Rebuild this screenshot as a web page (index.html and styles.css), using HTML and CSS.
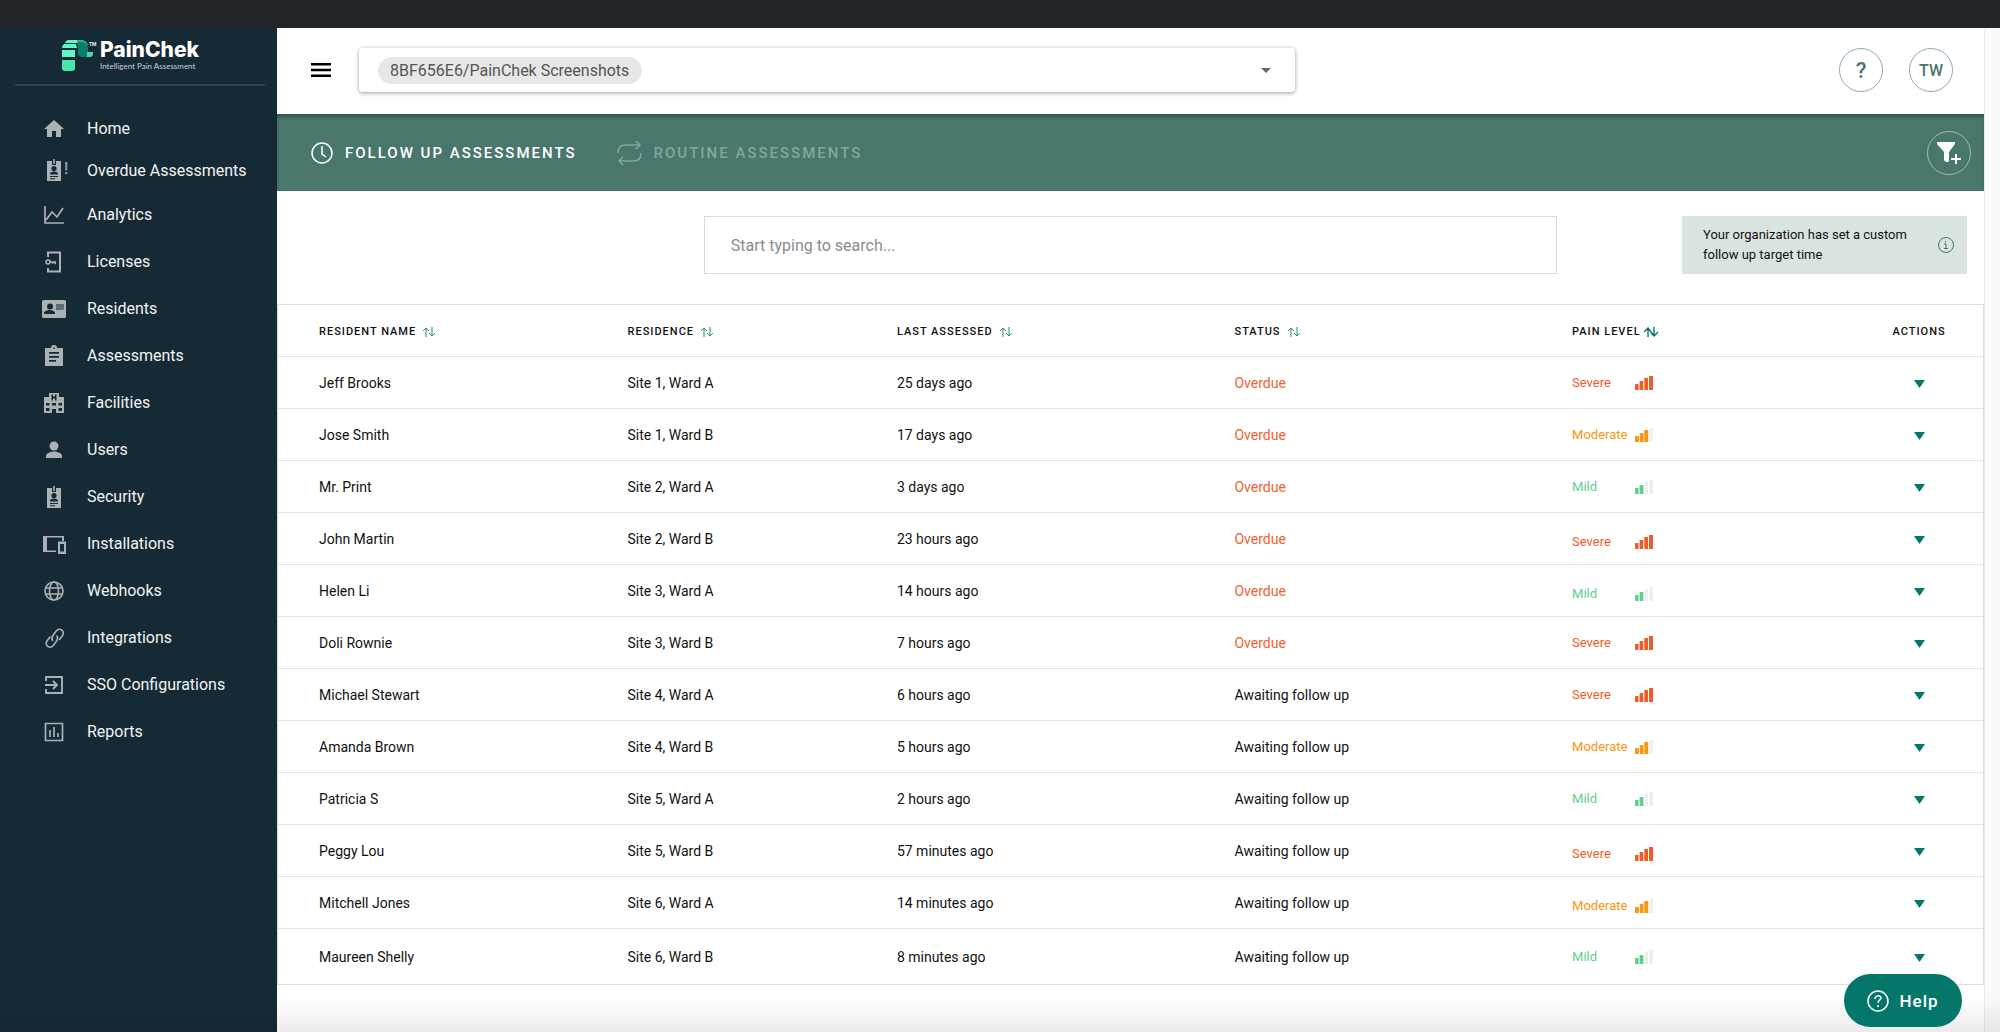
FILE: index.html
```html
<!DOCTYPE html>
<html lang="en">
<head>
    <meta charset="UTF-8">
    <meta name="viewport" content="width=device-width, initial-scale=1.0">
    <title>PainChek - Follow Up Assessments</title>
    <link rel="stylesheet" href="styles.css">
</head>
<body>
    <!-- icon sprite -->
    <svg class="sprite" aria-hidden="true">
        <symbol id="i-home" viewBox="0 0 24 24"><path d="M10 21v-6h4v6h5v-8h3L12 4 2 13h3v8z"/></symbol>
        <symbol id="i-badge" viewBox="0 0 24 24"><path fill-rule="evenodd" d="M5 3h5v4h4V3h5v20H5zM12 8a2.6 2.6 0 1 0 0 5.200a2.600 2.600 0 1 0 0-5.200zM8 16.500h8v-1c0-1.300-2.600-2-4-2s-4 .7-4 2zM8 18v1h8v-1zM8 20.300v1h5v-1z"/><path d="M11.200 1h1.600v5h-1.600z"/></symbol>
        <symbol id="i-chart" viewBox="0 0 24 24"><path d="M3 3v17h19M4 17l6-8 5 5 6-9" fill="none" stroke="currentColor" stroke-width="1.700"/></symbol>
        <symbol id="i-license" viewBox="0 0 24 24"><path d="M6 7V2.500h12v19H6V18" fill="none" stroke="currentColor" stroke-width="2"/><circle cx="6" cy="12" r="2" fill="none" stroke="currentColor" stroke-width="1.600"/><path d="M8 11.300h6v3h-1.500v-1.500h-1v1H10v-1H8z"/></symbol>
        <symbol id="i-card" viewBox="0 0 24 24"><path fill-rule="evenodd" d="M1.500 3h21A1.500 1.500 0 0 1 24 4.500v15a1.500 1.500 0 0 1-1.500 1.500h-21A1.500 1.500 0 0 1 0 19.500v-15A1.500 1.500 0 0 1 1.500 3zM8 6.500a3 3 0 1 0 0 6a3 3 0 1 0 0-6zM2 17h11v-1c0-2-3.700-3-5.500-3S2 14 2 16z"/><path d="M14 7h8v5l-1.500 1H14z" fill="#162a35" opacity=".5"/></symbol>
        <symbol id="i-clipboard" viewBox="0 0 24 24"><path fill-rule="evenodd" d="M3 4h6a3 3 0 0 1 6 0h6v18H3zM12 3.200a.9.9 0 1 0 0 1.800a.9.9 0 1 0 0-1.800zM7 8v1.800h10V8zM7 12v1.800h10V12zM7 16v1.800h7V16z"/></symbol>
        <symbol id="i-hospital" viewBox="0 0 24 24"><path fill-rule="evenodd" d="M2 6h5V2h10v4h5v16h-8v-4h-4v4H2zM9.500 3.500v6H11v-2h2v2h1.500v-6H13v2h-2v-2zM4 12v2.500h3.500V12zM10 12v2.500h4V12zM16.500 12v2.500H20V12zM4 17v3h3.500v-3zM16.500 17v3H20v-3z"/></symbol>
        <symbol id="i-user" viewBox="0 0 24 24"><circle cx="12" cy="8" r="4.500"/><path d="M4 20v-2c0-3 5-4.500 8-4.500s8 1.500 8 4.500v2z"/></symbol>
        <symbol id="i-devices" viewBox="0 0 24 24"><path fill-rule="evenodd" d="M1 4h21v5h-2V5.500H5v13h9V20H1zM16 9.500h8V22h-8zM18 12v7.500h4V12z"/></symbol>
        <symbol id="i-globe" viewBox="0 0 24 24"><g fill="none" stroke="currentColor" stroke-width="1.600"><circle cx="12" cy="12" r="9"/><ellipse cx="12" cy="12" rx="4.500" ry="9"/><path d="M4 9h16M4 15h16"/></g></symbol>
        <symbol id="i-link" viewBox="0 0 24 24"><g fill="none" stroke="currentColor" stroke-width="1.600" stroke-linecap="round"><path d="M15 10c1 1.500.8 3.200-.5 5l-3 4.200c-1.500 2-4 2.400-5.800 1.200s-2-3.700-.6-5.700L8 11"/><path d="M10.500 14.500c-1-1.500-.8-3.200.5-5l3-4.200c1.500-2 4-2.400 5.800-1.200s2 3.700.6 5.700L17.500 13.500"/></g></symbol>
        <symbol id="i-sso" viewBox="0 0 24 24"><path d="M4 8V4h16v16H4v-4M3 12h11M11 8l4 4-4 4" fill="none" stroke="currentColor" stroke-width="1.900"/></symbol>
        <symbol id="i-report" viewBox="0 0 24 24"><path d="M3.500 3.500h17v17h-17zM8 17v-7M12 17V7M16 17v-4" fill="none" stroke="currentColor" stroke-width="1.700"/></symbol>
        <symbol id="i-sort" viewBox="0 0 12 10"><path d="M3 10V1M0 4l3-3 3 3M9 0v9M6 6l3 3 3-3" fill="none" stroke="currentColor"/></symbol>
        <symbol id="i-sorted" viewBox="0 0 14 10"><path d="M4 10V1M0 5l4-4 6 8M10 0v9M7 6l3 3 4-4" fill="none" stroke="currentColor" stroke-width="1.400"/></symbol>
        <symbol id="i-down" viewBox="0 0 11 8"><path d="M0 0h11L5.500 8z"/></symbol>
        <!-- pain level bars -->
        <symbol id="i-severe" viewBox="0 0 18 14"><path d="M0 8h3.500v6H0zM4.600 5h3.600v9H4.600zM9.300 2h3.700v12H9.300zM14 0h4v14h-4z"/></symbol>
        <symbol id="i-moderate" viewBox="0 0 18 14"><path d="M0 8h3.800v6H0zM4.800 5h3.700v9H4.800zM9.300 2h4v12h-4z"/><path d="M14.500 0H18v14h-3.500z" fill="#eceff0"/></symbol>
        <symbol id="i-mild" viewBox="0 0 18 14"><path d="M0 8h3.600v6H0zM4.600 5h3.800v9H4.600z"/><path d="M9.700 2h3.300v12H9.700zM14.500 0H18v14h-3.500z" fill="#eceff0"/></symbol>
    </svg>

    <div class="topbar"></div>
    <div class="layout">
        <aside class="sidebar">
            <a class="brand" href="#">
                <svg class="brand-mark" viewBox="0 0 31 31" aria-hidden="true">
                    <path d="M7 0h12c4 0 6 2 7 5l-9 3c0-3-1-5-3-5H3c1-2 2-3 4-3z" fill="#25b392"/>
                    <path d="M7 0h8v3H3c1-2 2-3 4-3zM2 4h12l1 4H0c0-2 1-3 2-4zM0 10h13v7H0z" fill="#5df5c9"/>
                    <path d="M0 20h13v8c0 2-1 3-3 3H3c-2 0-3-1-3-3z" fill="#4be5a5"/>
                    <path d="M16 2h4c4 0 6 3 6 7v8h-6c-3 0-4-2-4-4z" fill="#087f70"/>
                    <path d="M25 12h6v2c0 2-1 3-3 3h-3z" fill="#43dca0"/>
                </svg>
                <span class="brand-tm">TM</span>
                <span class="brand-text">
                    <span class="brand-name">PainChek</span>
                    <span class="brand-tag">Intelligent Pain Assessment</span>
                </span>
            </a>
            <nav class="menu">
                <a class="tight" href="#"><svg><use href="#i-home"/></svg>Home</a>
                <a class="tight" href="#"><svg><use href="#i-badge"/></svg><span class="bang">!</span>Overdue Assessments</a>
                <a href="#"><svg><use href="#i-chart"/></svg>Analytics</a>
                <a href="#"><svg><use href="#i-license"/></svg>Licenses</a>
                <a href="#"><svg><use href="#i-card"/></svg>Residents</a>
                <a href="#"><svg><use href="#i-clipboard"/></svg>Assessments</a>
                <a href="#"><svg><use href="#i-hospital"/></svg>Facilities</a>
                <a href="#"><svg><use href="#i-user"/></svg>Users</a>
                <a href="#"><svg><use href="#i-badge"/></svg>Security</a>
                <a href="#"><svg><use href="#i-devices"/></svg>Installations</a>
                <a href="#"><svg><use href="#i-globe"/></svg>Webhooks</a>
                <a href="#"><svg><use href="#i-link"/></svg>Integrations</a>
                <a href="#"><svg><use href="#i-sso"/></svg>SSO Configurations</a>
                <a href="#"><svg><use href="#i-report"/></svg>Reports</a>
            </nav>
        </aside>

        <main class="main">
            <header class="header">
                <button class="burger" aria-label="Toggle menu">
                    <svg viewBox="0 0 20 14"><path d="M0 0h20v2.500H0zM0 5.700h20v2.500H0zM0 11.500h20V14H0z"/></svg>
                </button>
                <label class="org">
                    <select class="org-select" aria-label="Organization">
                        <option>8BF656E6/PainChek Screenshots</option>
                    </select>
                    <svg class="org-caret" viewBox="0 0 10 5" aria-hidden="true"><path d="M0 0h10L5 5z"/></svg>
                </label>
                <button class="circle help-circle" aria-label="Help">?</button>
                <button class="circle">TW</button>
            </header>

            <div class="tabs">
                <a class="tab active" href="#">
                    <svg viewBox="0 0 22 22"><circle cx="11" cy="11" r="10"/><path d="M11 4v8l4 3"/></svg>
                    Follow up assessments
                </a>
                <a class="tab" href="#">
                    <svg class="wide" viewBox="0 0 25 26"><path d="M1 13c0-5 2-8 7-8h15M19 1l4 4-4 4M24 13c0 5-2 8-7 8H2M6 17l-4 4 4 4"/></svg>
                    Routine assessments
                </a>
                <button class="circle filter" aria-label="Add filter">
                    <svg viewBox="0 0 24 22"><path d="M0 0h18v2l-6 8v9c-1 2-4 1-5-1v-8L0 2z"/><path d="M18 12h2v4h4v2h-4v4h-2v-4h-4v-2h4z"/></svg>
                </button>
            </div>

            <div class="toolbar">
                <input class="search" type="text" placeholder="Start typing to search..." aria-label="Search">
                <div class="notice">
                    <p>Your organization has set a custom follow up target time</p>
                    <svg viewBox="0 0 16 16" aria-hidden="true"><circle cx="8" cy="8" r="7.500"/><path d="M6 7h2v4M6 11.500h4M7.500 4v1.500"/></svg>
                </div>
            </div>

            <table class="residents">
                <thead>
                    <tr>
                        <th class="col-name"><button class="sort">Resident name <svg><use href="#i-sort"/></svg></button></th>
                        <th class="col-site"><button class="sort">Residence <svg><use href="#i-sort"/></svg></button></th>
                        <th class="col-last"><button class="sort">Last assessed <svg><use href="#i-sort"/></svg></button></th>
                        <th class="col-status"><button class="sort">Status <svg><use href="#i-sort"/></svg></button></th>
                        <th><button class="sort sorted">Pain level <svg><use href="#i-sorted"/></svg></button></th>
                        <th class="col-actions">Actions</th>
                    </tr>
                </thead>
                <tbody>
                    <tr>
                        <td>Jeff Brooks</td><td>Site 1, Ward A</td><td>25 days ago</td><td class="overdue">Overdue</td>
                        <td><div class="pain severe"><span>Severe</span><svg><use href="#i-severe"/></svg></div></td>
                        <td><button class="action" aria-label="Actions"><svg><use href="#i-down"/></svg></button></td>
                    </tr>
                    <tr>
                        <td>Jose Smith</td><td>Site 1, Ward B</td><td>17 days ago</td><td class="overdue">Overdue</td>
                        <td><div class="pain moderate"><span>Moderate</span><svg><use href="#i-moderate"/></svg></div></td>
                        <td><button class="action" aria-label="Actions"><svg><use href="#i-down"/></svg></button></td>
                    </tr>
                    <tr>
                        <td>Mr. Print</td><td>Site 2, Ward A</td><td>3 days ago</td><td class="overdue">Overdue</td>
                        <td><div class="pain mild"><span>Mild</span><svg><use href="#i-mild"/></svg></div></td>
                        <td><button class="action" aria-label="Actions"><svg><use href="#i-down"/></svg></button></td>
                    </tr>
                    <tr>
                        <td>John Martin</td><td>Site 2, Ward B</td><td>23 hours ago</td><td class="overdue">Overdue</td>
                        <td><div class="pain severe low"><span>Severe</span><svg><use href="#i-severe"/></svg></div></td>
                        <td><button class="action" aria-label="Actions"><svg><use href="#i-down"/></svg></button></td>
                    </tr>
                    <tr>
                        <td>Helen Li</td><td>Site 3, Ward A</td><td>14 hours ago</td><td class="overdue">Overdue</td>
                        <td><div class="pain mild low"><span>Mild</span><svg><use href="#i-mild"/></svg></div></td>
                        <td><button class="action" aria-label="Actions"><svg><use href="#i-down"/></svg></button></td>
                    </tr>
                    <tr>
                        <td>Doli Rownie</td><td>Site 3, Ward B</td><td>7 hours ago</td><td class="overdue">Overdue</td>
                        <td><div class="pain severe"><span>Severe</span><svg><use href="#i-severe"/></svg></div></td>
                        <td><button class="action" aria-label="Actions"><svg><use href="#i-down"/></svg></button></td>
                    </tr>
                    <tr>
                        <td>Michael Stewart</td><td>Site 4, Ward A</td><td>6 hours ago</td><td>Awaiting follow up</td>
                        <td><div class="pain severe"><span>Severe</span><svg><use href="#i-severe"/></svg></div></td>
                        <td><button class="action" aria-label="Actions"><svg><use href="#i-down"/></svg></button></td>
                    </tr>
                    <tr>
                        <td>Amanda Brown</td><td>Site 4, Ward B</td><td>5 hours ago</td><td>Awaiting follow up</td>
                        <td><div class="pain moderate"><span>Moderate</span><svg><use href="#i-moderate"/></svg></div></td>
                        <td><button class="action" aria-label="Actions"><svg><use href="#i-down"/></svg></button></td>
                    </tr>
                    <tr>
                        <td>Patricia S</td><td>Site 5, Ward A</td><td>2 hours ago</td><td>Awaiting follow up</td>
                        <td><div class="pain mild"><span>Mild</span><svg><use href="#i-mild"/></svg></div></td>
                        <td><button class="action" aria-label="Actions"><svg><use href="#i-down"/></svg></button></td>
                    </tr>
                    <tr>
                        <td>Peggy Lou</td><td>Site 5, Ward B</td><td>57 minutes ago</td><td>Awaiting follow up</td>
                        <td><div class="pain severe low"><span>Severe</span><svg><use href="#i-severe"/></svg></div></td>
                        <td><button class="action" aria-label="Actions"><svg><use href="#i-down"/></svg></button></td>
                    </tr>
                    <tr>
                        <td>Mitchell Jones</td><td>Site 6, Ward A</td><td>14 minutes ago</td><td>Awaiting follow up</td>
                        <td><div class="pain moderate low"><span>Moderate</span><svg><use href="#i-moderate"/></svg></div></td>
                        <td><button class="action" aria-label="Actions"><svg><use href="#i-down"/></svg></button></td>
                    </tr>
                    <tr>
                        <td>Maureen Shelly</td><td>Site 6, Ward B</td><td>8 minutes ago</td><td>Awaiting follow up</td>
                        <td><div class="pain mild"><span>Mild</span><svg><use href="#i-mild"/></svg></div></td>
                        <td><button class="action" aria-label="Actions"><svg><use href="#i-down"/></svg></button></td>
                    </tr>
                </tbody>
            </table>
        </main>
        <div class="gutter"></div>
    </div>

    <div class="fade"></div>
    <button class="help">
        <svg viewBox="0 0 22 22" aria-hidden="true"><circle cx="11" cy="11" r="10"/><path d="M8 9c0-4 6-4 6-1 0 2-3 2-3 5M11 15v2"/></svg>
        Help
    </button>
</body>
</html>
```
FILE: styles.css
```css
* { box-sizing: border-box; }
body { margin: 0; min-height: 100vh; display: flex; flex-direction: column; font-family: Roboto, "Liberation Sans", sans-serif; font-size: 14px; color: #111; background: #fff; }
button { font-family: inherit; padding: 0; border: none; background: none; cursor: pointer; }
a { text-decoration: none; color: inherit; }
svg { fill: currentColor; flex-shrink: 0; }
.sprite { position: absolute; width: 0; height: 0; }

.topbar { height: 28px; background: #22262b; }
.layout { flex: 1; display: flex; }

/* sidebar */
.sidebar { width: 277px; flex-shrink: 0; background: #162a35; color: #f1f3f4; }
.brand { display: flex; margin: 0 12px 0 15px; padding: 11px 0 11px 47px; height: 58px; border-bottom: 2px solid #304551; }
.brand-mark { width: 31px; height: 31px; margin-top: 1px; }
.brand-tm { width: 8px; margin-top: 2px; font-size: 5px; line-height: 6px; font-weight: 700; margin-left: -4px; margin-right: 3px; }
.brand-text { display: flex; flex-direction: column; }
.brand-name { font-family: Inter, sans-serif; font-size: 21px; line-height: 22px; font-weight: 800; color: #fff; }
.brand-tag { font-family: Lato, sans-serif; font-size: 8px; line-height: 10px; color: #c8ced1; }
.menu { padding-top: 21px; font-size: 16px; }
.menu a { display: flex; align-items: center; height: 47px; padding-left: 42px; position: relative; }
.menu a.tight { height: 42px; }
.menu svg { width: 24px; height: 24px; margin-right: 21px; color: #abb1b5; }
.menu .bang { position: absolute; left: 64px; top: 10px; font-weight: 500; color: #9ea6aa; }

/* header */
.main { flex: 1; min-width: 0; }
.header { display: flex; align-items: center; height: 86px; padding: 0 31px 2px 34px; }
.burger svg { display: block; width: 20px; height: 14px; }
.org { display: flex; align-items: center; width: 57%; height: 44px; margin-left: 28px; margin-right: auto; padding: 0 24px 0 19px; border-radius: 4px; box-shadow: 0 1px 4px rgba(0, 0, 0, 0.4); }
.org-select { appearance: none; height: 27px; padding: 0 12px; border: none; border-radius: 14px; background: #e7e7e7; font: 16px Roboto, sans-serif; color: #555; }
.org-caret { width: 10px; height: 5px; margin-left: auto; color: #666; }
.circle { display: flex; align-items: center; justify-content: center; width: 44px; height: 44px; margin-left: 26px; border: 1px solid #8fb0a9; border-radius: 50%; font-size: 16px; font-weight: 500; color: #49766d; }
.help-circle { font-size: 22px; }

/* tabs */
.tabs { display: flex; align-items: center; height: 77px; padding: 0 13px 0 34px; background: #49766d; box-shadow: inset 0 4px 4px -2px rgba(0, 0, 0, 0.4); }
.tab { display: flex; align-items: center; gap: 12px; margin-right: 40px; font-size: 15px; font-weight: 500; letter-spacing: 2px; text-transform: uppercase; color: #86a49d; }
.tab.active { color: #fff; }
.tab svg { width: 22px; height: 22px; fill: none; stroke: currentColor; stroke-width: 1.5; }
.tab .wide { width: 25px; height: 26px; }
.filter { margin-left: auto; border-color: #a4bbb6; color: #fff; }
.filter svg { width: 24px; height: 22px; }

/* search */
.toolbar { display: grid; grid-template-columns: 1fr 50% 1fr; padding: 25px 0 30px; }
.search { grid-column: 2; height: 58px; padding: 0 26px; border: 1px solid #d9d9d9; font: 16px Roboto, sans-serif; }
.search::placeholder { color: #8c8c8c; }
.notice { justify-self: end; display: flex; align-items: center; justify-content: space-between; width: 285px; margin-right: 17px; padding: 0 13px 0 21px; background: #d9e4e1; }
.notice p { width: 208px; margin: 0; font-size: 13px; line-height: 20px; }
.notice svg { width: 16px; height: 16px; fill: none; stroke: #49766d; }

/* residents table */
.residents { width: 100%; table-layout: fixed; border-collapse: separate; border-spacing: 0; border: 1px solid #dcdcdc; }
.residents th, .residents td { height: 52px; padding: 0; text-align: left; border-bottom: 1px solid #e3e3e3; }
.residents th:first-child, .residents td:first-child { padding-left: 41px; }
.residents th:last-child, .residents td:last-child { text-align: center; }
.residents tbody tr:last-child td { height: 55px; border-bottom: none; }
.residents thead th { padding-top: 2px; font-size: 11px; font-weight: 500; letter-spacing: 1px; text-transform: uppercase; }
.col-name { width: 20.5%; }
.col-site { width: 15.8%; }
.col-last { width: 19.8%; }
.col-status { width: 19.8%; }
.col-actions { width: 7.5%; }
.sort { display: flex; align-items: center; gap: 7px; font-size: 11px; font-weight: 500; letter-spacing: 1px; text-transform: uppercase; color: #111; }
.sort svg { width: 12px; height: 10px; color: #25897c; }
.sort.sorted { gap: 3px; }
.sorted svg { width: 14px; color: #05776a; }
.overdue { color: #f2612f; }
.pain { display: flex; align-items: center; font-size: 13px; }
.pain.low { padding-top: 6px; }
.pain span { width: 63px; }
.pain svg { width: 18px; height: 14px; }
.severe { color: #f15a29; }
.moderate { color: #fb9610; }
.mild { color: #5fcf8e; }
.action { color: #05776a; }
.action svg { display: block; width: 11px; height: 8px; }

.gutter { width: 16px; flex-shrink: 0; background: #fafafa; border-left: 1px solid #ececec; }

/* help launcher */
.fade { position: fixed; left: 0; right: 0; bottom: 0; height: 36px; background: linear-gradient(rgba(0, 0, 0, 0), rgba(0, 0, 0, 0.08)); pointer-events: none; }
.help { position: fixed; right: 38px; bottom: 5px; display: flex; align-items: center; justify-content: center; gap: 10px; width: 118px; height: 53px; border-radius: 27px; background: #05776a; color: #fff; font-size: 17px; font-weight: 500; letter-spacing: 1px; }
.help svg { width: 22px; height: 22px; fill: none; stroke: currentColor; stroke-width: 1.5; }
```
